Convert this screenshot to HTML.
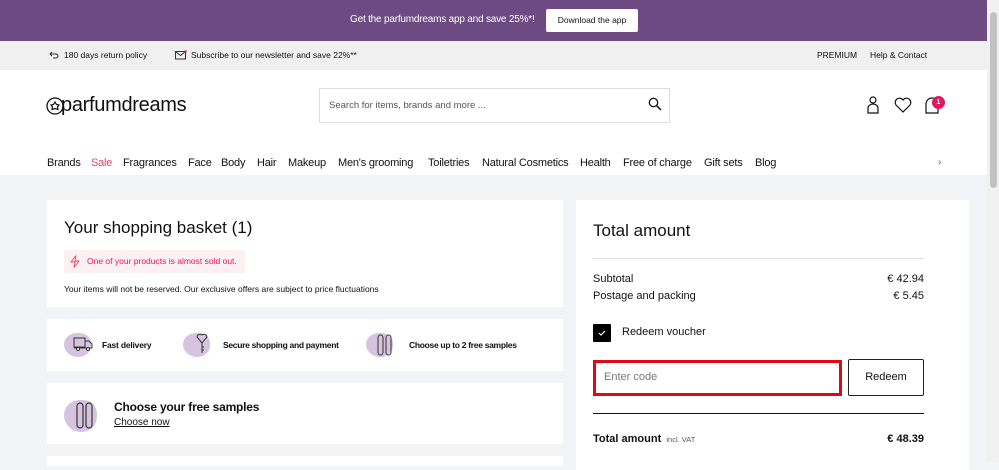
<!DOCTYPE html>
<html><head><meta charset="utf-8"><style>
*{margin:0;padding:0;box-sizing:border-box}
body{width:999px;height:462px;overflow:hidden;font-family:"Liberation Sans",sans-serif;color:#111;background:#f3f4f8;position:relative}
.abs{position:absolute}
.top{left:0;top:0;width:987px;height:41px;background:#6e4a82}
.gray{left:0;top:41px;width:987px;height:29px;background:#f0f0f0;font-size:9px}
.hdr{left:0;top:70px;width:987px;height:105px;background:#fff}
.card{background:#fff}
.sb{left:987px;top:0;width:12px;height:462px;background:#f1f1f1}
.nav span{position:absolute;top:157px;font-size:11px;letter-spacing:-0.2px;white-space:nowrap}
.t{white-space:nowrap}
.blob{background:#d6c3df;border-radius:50% 45% 50% 55%}
</style></head><body>
<div class="abs top"></div>
<div class="abs t" style="left:350px;top:14px;color:#fff;font-size:10px;letter-spacing:-0.2px">Get the parfumdreams app and save 25%*!</div>
<div class="abs" style="left:546px;top:9px;width:92px;height:23px;background:#fff;border-radius:2px;font-size:8.5px;line-height:23px;text-align:center">Download the app</div>
<div class="abs gray"></div>
<svg class="abs" style="left:49px;top:50px" width="10" height="10" viewBox="0 0 10 10"><path d="M3 2 L1 4 L3 6 M1 4 H7 A2 2 0 0 1 7 8 H4" fill="none" stroke="#333" stroke-width="1"/></svg>
<div class="abs t" style="left:64px;top:50px;font-size:8.5px">180 days return policy</div>
<svg class="abs" style="left:175px;top:50px" width="12" height="10" viewBox="0 0 12 10"><rect x="0.5" y="1.5" width="10" height="7.5" fill="none" stroke="#333"/><path d="M0.5 1.5 L5.5 5.5 L10.5 1.5" fill="none" stroke="#333"/><circle cx="10.5" cy="1.5" r="1.3" fill="#e2185f"/></svg>
<div class="abs t" style="left:191px;top:50px;font-size:8.5px">Subscribe to our newsletter and save 22%**</div>
<div class="abs t" style="left:817px;top:50px;font-size:8.5px">PREMIUM</div>
<div class="abs t" style="left:870px;top:50px;font-size:8.5px">Help &amp; Contact</div>
<div class="abs hdr"></div>
<svg class="abs" style="left:46px;top:93px" width="20" height="30" viewBox="0 0 20 30"><circle cx="9" cy="13" r="8" fill="none" stroke="#111" stroke-width="1.3"/><path d="M9 9 l1.5 2.5 2.5 .5-1.5 2 .5 2.5-3-1-3 1 .5-2.5-1.5-2 2.5-.5z" fill="none" stroke="#111" stroke-width="1.2"/></svg>
<div class="abs t" style="left:61px;top:94px;font-size:20px;letter-spacing:-0.3px">parfumdreams</div>
<div class="abs" style="left:319px;top:88px;width:351px;height:35px;border:1px solid #ddd;background:#fff"></div>
<div class="abs t" style="left:329px;top:100px;font-size:9.5px;color:#555">Search for items, brands and more ...</div>
<svg class="abs" style="left:648px;top:97px" width="14" height="14" viewBox="0 0 14 14"><circle cx="5.5" cy="5.5" r="4.2" fill="none" stroke="#111" stroke-width="1.3"/><path d="M8.5 8.5 L13 13" stroke="#111" stroke-width="1.5"/></svg>
<svg class="abs" style="left:866px;top:96px" width="14" height="18" viewBox="0 0 14 18"><circle cx="7" cy="4" r="3" fill="none" stroke="#111" stroke-width="1.2"/><path d="M2 17 V12 A5 4 0 0 1 12 12 V17 Z" fill="none" stroke="#111" stroke-width="1.2"/></svg>
<svg class="abs" style="left:894px;top:97px" width="18" height="16" viewBox="0 0 18 16"><path d="M9 15 L2 8 A4 4 0 0 1 9 3 A4 4 0 0 1 16 8 Z" fill="none" stroke="#111" stroke-width="1.2"/></svg>
<svg class="abs" style="left:924px;top:97px" width="16" height="17" viewBox="0 0 16 17"><path d="M2 16 V7 A6 6 0 0 1 14 7 V16 Z" fill="none" stroke="#111" stroke-width="1.2"/></svg>
<div class="abs" style="left:932px;top:96px;width:13px;height:13px;border-radius:50%;background:#e2185f;color:#fff;font-size:7px;font-weight:bold;text-align:center;line-height:13px">1</div>
<div class="nav">
<span style="left:47px">Brands</span><span style="left:91px;color:#e2466f">Sale</span><span style="left:123px">Fragrances</span><span style="left:188px">Face</span><span style="left:221px">Body</span><span style="left:257px">Hair</span><span style="left:288px">Makeup</span><span style="left:338px">Men's grooming</span><span style="left:428px">Toiletries</span><span style="left:482px">Natural Cosmetics</span><span style="left:580px">Health</span><span style="left:623px">Free of charge</span><span style="left:704px">Gift sets</span><span style="left:755px">Blog</span>
<span style="left:938px;font-size:10px;color:#666">›</span></div>

<div class="abs card" style="left:47px;top:200px;width:516px;height:107px"></div>
<div class="abs t" style="left:64px;top:218px;font-size:17px">Your shopping basket (1)</div>
<div class="abs" style="left:64px;top:250px;width:181px;height:23px;background:#fdf0f3;border-radius:2px"></div>
<svg class="abs" style="left:70px;top:255px" width="10" height="13" viewBox="0 0 10 13"><path d="M6 0.5 L1 7 H5 L4 12.5 L9 6 H5 Z" fill="none" stroke="#e2466f" stroke-width="0.9"/></svg>
<div class="abs t" style="left:87px;top:256px;font-size:8.5px;color:#e2185f">One of your products is almost sold out.</div>
<div class="abs t" style="left:64px;top:284px;font-size:8.5px">Your items will not be reserved. Our exclusive offers are subject to price fluctuations</div>

<div class="abs card" style="left:47px;top:319px;width:516px;height:52px"></div>
<div class="abs blob" style="left:64px;top:333px;width:27px;height:24px"></div>
<div class="abs t" style="left:102px;top:340px;font-size:8.5px;font-weight:bold;letter-spacing:-0.2px">Fast delivery</div>
<div class="abs blob" style="left:183px;top:333px;width:27px;height:24px"></div>
<div class="abs t" style="left:223px;top:340px;font-size:8.5px;font-weight:bold;letter-spacing:-0.3px">Secure shopping and payment</div>
<div class="abs blob" style="left:366px;top:333px;width:27px;height:24px"></div>
<div class="abs t" style="left:409px;top:340px;font-size:8.5px;font-weight:bold;letter-spacing:-0.3px">Choose up to 2 free samples</div>
<svg class="abs" style="left:73px;top:336px" width="20" height="16" viewBox="0 0 20 16"><rect x="1" y="2" width="11" height="9" fill="none" stroke="#333"/><path d="M12 5 H16 L19 8 V12 H1" fill="none" stroke="#333"/><circle cx="5" cy="13" r="1.5" fill="#fff" stroke="#333"/><circle cx="15" cy="13" r="1.5" fill="#fff" stroke="#333"/></svg>
<svg class="abs" style="left:195px;top:333px" width="14" height="22" viewBox="0 0 14 22"><path d="M7 10 L2 4 A3 3 0 0 1 7 2 A3 3 0 0 1 12 4 Z M7 10 V20 M7 14 H9 M7 17 H9" fill="none" stroke="#333"/></svg>
<svg class="abs" style="left:377px;top:334px" width="16" height="22" viewBox="0 0 16 22"><rect x="1" y="1" width="5" height="20" rx="2.5" fill="none" stroke="#333"/><rect x="9" y="1" width="5" height="20" rx="2.5" fill="none" stroke="#333"/></svg>

<div class="abs card" style="left:47px;top:383px;width:516px;height:61px"></div>
<div class="abs blob" style="left:64px;top:400px;width:33px;height:32px"></div>
<svg class="abs" style="left:76px;top:402px" width="18" height="28" viewBox="0 0 18 28"><rect x="1" y="1" width="6" height="25" rx="3" fill="none" stroke="#333" stroke-width="1.2"/><rect x="10" y="1" width="6" height="25" rx="3" fill="none" stroke="#333" stroke-width="1.2"/></svg>
<div class="abs t" style="left:114px;top:400px;font-size:12px;font-weight:bold;letter-spacing:-0.2px">Choose your free samples</div>
<div class="abs t" style="left:114px;top:417px;font-size:10px;text-decoration:underline">Choose now</div>
<div class="abs card" style="left:47px;top:456px;width:516px;height:10px"></div>

<div class="abs card" style="left:576px;top:200px;width:393px;height:270px"></div>
<div class="abs t" style="left:593px;top:221px;font-size:17px">Total amount</div>
<div class="abs" style="left:593px;top:258px;width:331px;height:1px;background:#ddd"></div>
<div class="abs t" style="left:593px;top:273px;font-size:11px">Subtotal</div>
<div class="abs t" style="right:75px;top:273px;font-size:11px">€ 42.94</div>
<div class="abs t" style="left:593px;top:290px;font-size:11px">Postage and packing</div>
<div class="abs t" style="right:75px;top:290px;font-size:11px">€ 5.45</div>
<div class="abs" style="left:593px;top:324px;width:18px;height:18px;background:#000;border-radius:1px"></div>
<svg class="abs" style="left:597px;top:328px" width="10" height="10" viewBox="0 0 10 10"><path d="M2 5 L4 7 L8 3" fill="none" stroke="#fff" stroke-width="1.2"/></svg>
<div class="abs t" style="left:622px;top:326px;font-size:11px">Redeem voucher</div>
<div class="abs" style="left:593px;top:360px;width:249px;height:36px;border:3px solid #e30613"></div>
<div class="abs t" style="left:604px;top:371px;font-size:11px;color:#777">Enter code</div>
<div class="abs" style="left:848px;top:359px;width:76px;height:37px;border:1px solid #222;border-radius:2px;font-size:11px;text-align:center;line-height:35px">Redeem</div>
<div class="abs" style="left:593px;top:413px;width:331px;height:1px;background:#111"></div>
<div class="abs t" style="left:593px;top:433px;font-size:11px;font-weight:bold">Total amount <span style="font-weight:normal;font-size:7.5px;color:#555">&nbsp;incl. VAT</span></div>
<div class="abs t" style="right:75px;top:433px;font-size:11px;font-weight:bold">€ 48.39</div>

<div class="abs sb"></div>
<div class="abs" style="left:990px;top:12px;width:7px;height:176px;background:#c1c1c1;border-radius:4px"></div>
</body></html>
